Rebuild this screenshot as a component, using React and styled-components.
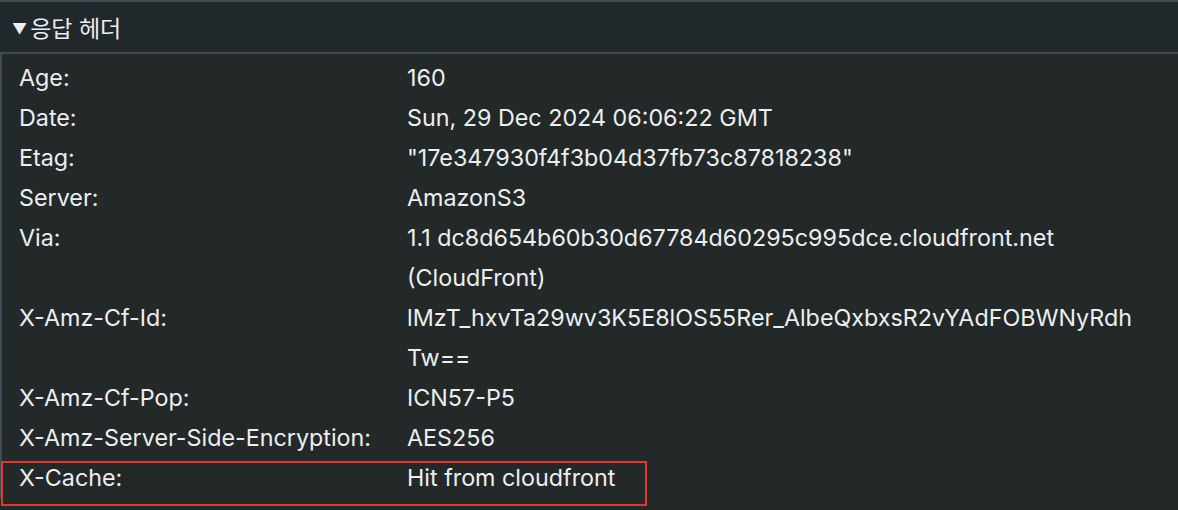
import styled, { createGlobalStyle } from "styled-components";

const GlobalStyle = createGlobalStyle`
  html, body {
    margin: 0;
    padding: 0;
    background: #232829;
  }
  body {
    font-family: Inter, "Noto Sans CJK KR", "Liberation Sans", sans-serif;
    color: #e6e8ea;
    -webkit-font-smoothing: antialiased;
  }
`;

const Panel = styled.section`
  width: 1178px;
  height: 510px;
  box-sizing: border-box;
  background: #232829;
  border-top: 2px solid #3f4b52;
  overflow: hidden;
`;

const Header = styled.div`
  height: 50px;
  display: flex;
  align-items: center;
  padding-left: 12px;
  background: #20282b;
  border-bottom: 2px solid #3f4b52;
  font-size: 23px;
  color: #eceef0;
  font-family: Inter, "Noto Sans CJK KR", sans-serif;
`;

const Arrow = styled.span`
  font-size: 15px;
  margin-right: 3px;
  position: relative;
  top: 1px;
`;

const Body = styled.div`
  border-left: 2px solid #3f4b52;
  padding: 4px 0 0 17px;
`;

const Row = styled.div`
  display: grid;
  grid-template-columns: 388px 1fr;
  font-size: 23.3px;
  line-height: 40px;
  position: relative;
`;

const Label = styled.div`
  color: #eceef0;
  white-space: nowrap;
`;

const Value = styled.div`
  color: #eceef0;
  white-space: nowrap;
`;

const Line = styled.div``;

const Highlight = styled.div`
  position: absolute;
  left: -18px;
  top: 3px;
  width: 646px;
  height: 45px;
  box-sizing: border-box;
  border: 2px solid #e0362c;
  pointer-events: none;
`;

const headers = [
  ["Age:", ["160"]],
  ["Date:", ["Sun, 29 Dec 2024 06:06:22 GMT"]],
  ["Etag:", ['"17e347930f4f3b04d37fb73c87818238"']],
  ["Server:", ["AmazonS3"]],
  ["Via:", ["1.1 dc8d654b60b30d67784d60295c995dce.cloudfront.net", "(CloudFront)"]],
  ["X-Amz-Cf-Id:", ["lMzT_hxvTa29wv3K5E8lOS55Rer_AlbeQxbxsR2vYAdFOBWNyRdh", "Tw=="]],
  ["X-Amz-Cf-Pop:", ["ICN57-P5"]],
  ["X-Amz-Server-Side-Encryption:", ["AES256"]],
  ["X-Cache:", ["Hit from cloudfront"], true],
];

export default function App() {
  return (
    <>
      <GlobalStyle />
      <Panel>
        <Header>
          <Arrow>▼</Arrow>응답 헤더
        </Header>
        <Body>
          {headers.map(([name, lines, marked]) => (
            <Row key={name}>
              <Label>{name}</Label>
              <Value>
                {lines.map((l) => (
                  <Line key={l}>{l}</Line>
                ))}
              </Value>
              {marked && <Highlight />}
            </Row>
          ))}
        </Body>
      </Panel>
    </>
  );
}
